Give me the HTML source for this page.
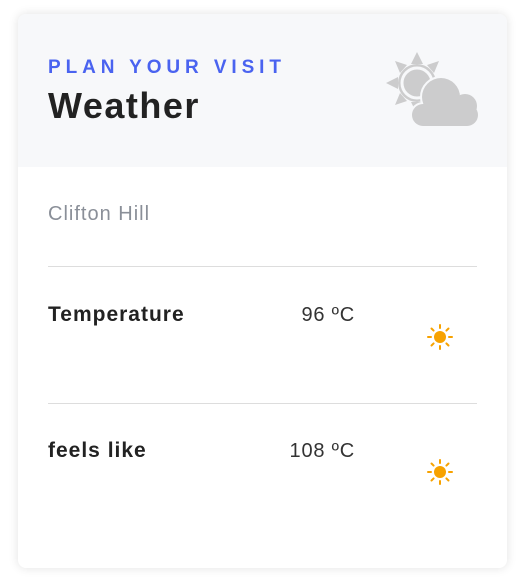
<!DOCTYPE html><html><head><style>
body{margin:0;background:#fff;font-family:"Liberation Sans",sans-serif;}
.card{position:absolute;left:18px;top:14px;width:489px;height:554px;background:#fff;border-radius:8px;box-shadow:0 0 10px rgba(0,0,0,.12);overflow:hidden}
.hd{height:153px;background:#f7f8fa;position:relative}
.sub{position:absolute;left:30px;top:43px;color:#4a63f0;font-weight:bold;font-size:19px;letter-spacing:4.9px}
.t{position:absolute;left:30px;top:71px;color:#222;font-weight:bold;font-size:36px;letter-spacing:1.5px}
.loc{position:absolute;left:30px;top:189px;color:#8a8f98;font-size:20px;letter-spacing:1px}
.hr{position:absolute;left:30px;width:429px;height:1px;background:#ddd}
.lb{position:absolute;left:30px;font-weight:bold;font-size:21px;letter-spacing:1px;color:#222}
.v{position:absolute;right:152px;font-size:20px;letter-spacing:.8px;color:#333}
svg{position:absolute}
</style></head><body><div class="card">
<div class="hd"><div class="sub">PLAN YOUR VISIT</div><div class="t">Weather</div>
<svg style="left:365px;top:35px" width="100" height="80" viewBox="0 0 100 80">
<g fill="#cccccd"><polygon points="34,3 40,15 28,15"/><polygon points="56,12 51,24 44,16"/><polygon points="12,12 24,16 17,24"/><polygon points="3,34 15,28 15,40"/><polygon points="12,56 17,44 24,52"/><polygon points="34,65 28,53 40,53"/>
<circle cx="34" cy="34" r="19"/></g>
<circle cx="34" cy="34" r="15" fill="none" stroke="#f7f8fa" stroke-width="3"/>
<circle cx="34" cy="34" r="12" fill="#cccccd"/>
<g fill="#cccccd" stroke="#f7f8fa" stroke-width="4"><circle cx="58" cy="48" r="19"/><circle cx="82" cy="57" r="12"/><rect x="29" y="55" width="66" height="22" rx="11"/></g>
<g fill="#cccccd"><circle cx="58" cy="48" r="19"/><circle cx="82" cy="57" r="12"/><rect x="29" y="55" width="66" height="22" rx="11"/></g>
</svg></div>
<div class="loc">Clifton Hill</div>
<div class="hr" style="top:252px"></div>
<div class="lb" style="top:289px">Temperature</div><div class="v" style="top:290px">96 ºC</div>
<svg style="left:407px;top:308px" width="30" height="30" viewBox="-15 -15 30 30"><circle r="6" fill="#f7a200"/><g stroke="#f7a200" stroke-width="2" stroke-linecap="round"><line x1="0" y1="-9" x2="0" y2="-12"/><line x1="0" y1="9" x2="0" y2="12"/><line x1="-9" y1="0" x2="-12" y2="0"/><line x1="9" y1="0" x2="12" y2="0"/><line x1="6.4" y1="6.4" x2="8.5" y2="8.5"/><line x1="-6.4" y1="6.4" x2="-8.5" y2="8.5"/><line x1="6.4" y1="-6.4" x2="8.5" y2="-8.5"/><line x1="-6.4" y1="-6.4" x2="-8.5" y2="-8.5"/></g></svg>
<div class="hr" style="top:389px"></div>
<div class="lb" style="top:425px">feels like</div><div class="v" style="top:426px">108 ºC</div>
<svg style="left:407px;top:443px" width="30" height="30" viewBox="-15 -15 30 30"><circle r="6" fill="#f7a200"/><g stroke="#f7a200" stroke-width="2" stroke-linecap="round"><line x1="0" y1="-9" x2="0" y2="-12"/><line x1="0" y1="9" x2="0" y2="12"/><line x1="-9" y1="0" x2="-12" y2="0"/><line x1="9" y1="0" x2="12" y2="0"/><line x1="6.4" y1="6.4" x2="8.5" y2="8.5"/><line x1="-6.4" y1="6.4" x2="-8.5" y2="8.5"/><line x1="6.4" y1="-6.4" x2="8.5" y2="-8.5"/><line x1="-6.4" y1="-6.4" x2="-8.5" y2="-8.5"/></g></svg>
</div></body></html>
